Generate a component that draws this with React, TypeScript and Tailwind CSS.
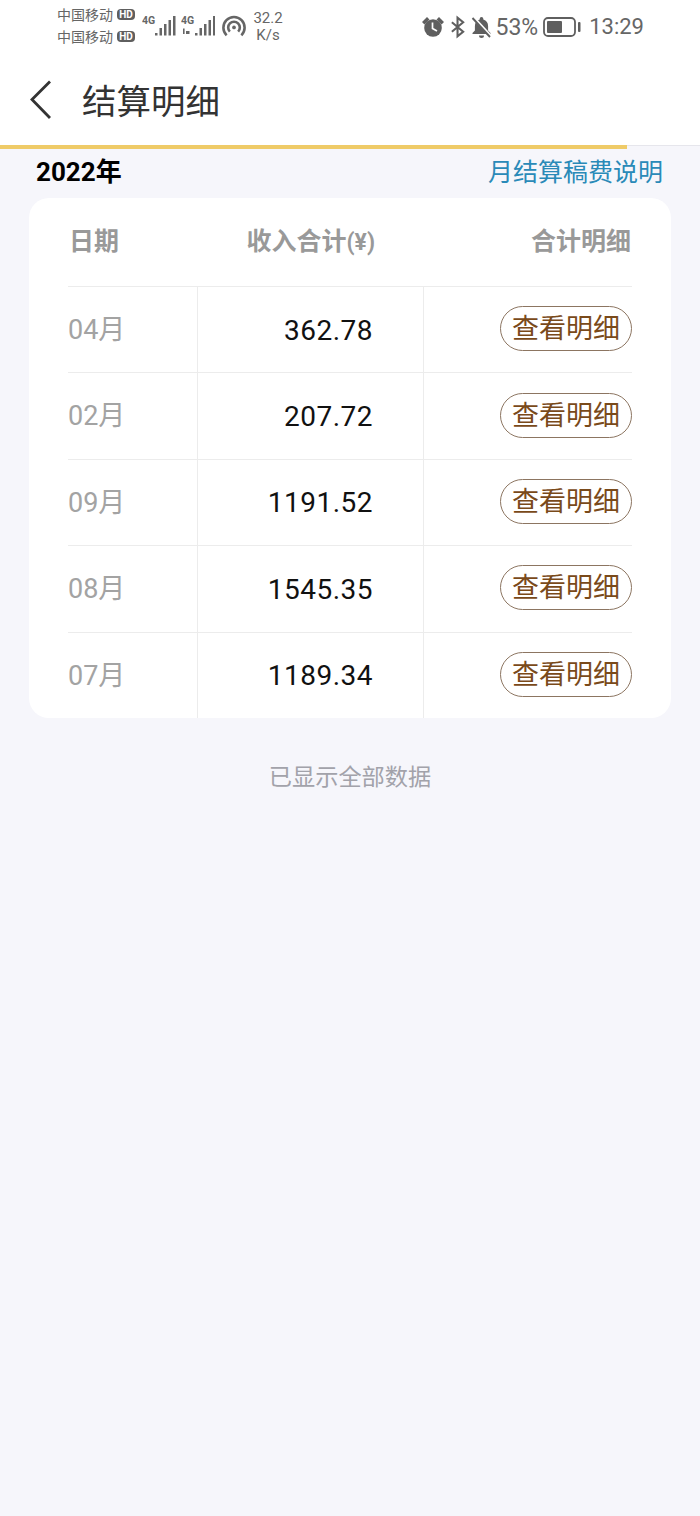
const cjk = { fontFamily: '"Roboto", "Noto Sans CJK SC", sans-serif' };

const rows = [
  { month: '04月', amount: '362.78' },
  { month: '02月', amount: '207.72' },
  { month: '09月', amount: '1191.52' },
  { month: '08月', amount: '1545.35' },
  { month: '07月', amount: '1189.34' },
];

function HdBadge() {
  return (
    <span className="ml-[4px] flex h-[11px] w-[18px] items-center justify-center rounded-[4px] bg-[#5f5f5f] text-[10px] font-bold leading-none text-white">
      HD
    </span>
  );
}

function Signal({ dual }: { dual?: boolean }) {
  const x = dual ? 14 : 13;
  return (
    <svg width="34" height="26" viewBox="0 0 34 26" fill="#666">
      <text x="0" y="10" fontSize="10.5" fontWeight="700" fontFamily="Roboto, sans-serif">4G</text>
      {dual ? <path d="M2 14.500h1.600V20H2zM5 17h3.500v3H5z" /> : null}
      <rect x={x} y="19" width="2.500" height="2.500" />
      <rect x={x + 4.500} y="14" width="2.500" height="7.500" />
      <rect x={x + 9} y="10" width="2.500" height="11.500" />
      <rect x={x + 13.500} y="6" width="2.500" height="15.500" />
      <rect x={x + 18} y="2" width="2.500" height="19.500" />
    </svg>
  );
}

function StatusBar() {
  return (
    <div className="flex h-[54px] items-center pl-[57px] pr-[56px] text-[#666]">
      <div className="-mt-[3px] flex flex-col gap-[4px] text-[14px] leading-[18px]">
        <div className="flex items-center">中国移动<HdBadge /></div>
        <div className="flex items-center">中国移动<HdBadge /></div>
      </div>
      <div className="ml-[7px] flex items-center gap-[5px]">
        <Signal />
        <Signal dual />
      </div>
      <svg className="ml-[7px]" width="24" height="24" viewBox="0 0 26 26" fill="none" stroke="#666" strokeWidth="2.800">
        <path d="M5 22A11.500 11.500 0 1 1 21 22" />
        <path d="M8.500 18A6.300 6.300 0 1 1 17.500 18" />
        <circle cx="13" cy="13.500" r="2" fill="#666" stroke="none" />
      </svg>
      <div className="ml-[7px] flex w-[30px] flex-col items-center text-[15px] leading-[17px]">
        <span>32.2</span>
        <span>K/s</span>
      </div>
      <div className="ml-auto flex items-center">
        <svg width="22" height="22" viewBox="0 0 22 22" fill="#5f5f5f">
          <circle cx="11" cy="12" r="8.800" />
          <path d="M0 6 5 1l2.500 2.500-5 5zM22 6l-5-5-2.500 2.500 5 5z" />
          <path d="M10.500 6.500v6l4.500 2.500" fill="none" stroke="#fff" strokeWidth="1.700" />
        </svg>
        <svg className="ml-[6px]" width="16" height="24" viewBox="0 0 17 24" fill="none" stroke="#5f5f5f" strokeWidth="2.200">
          <path d="M2 7l12 10-6 5V2l6 5L2 17" />
        </svg>
        <svg className="ml-[5px]" width="21" height="22" viewBox="0 0 21 22" fill="#5f5f5f">
          <path d="M10.500 1a1.800 1.800 0 0 1 1.800 1.800v.7c3.200.8 4.800 3.400 4.800 6.700v4.300l2.400 2.500v1H1.500v-1l2.400-2.500v-4.300c0-3.300 1.600-5.900 4.800-6.700v-.7A1.800 1.800 0 0 1 10.500 1zM8 19.500h5a2.500 2.500 0 0 1-5 0z" />
          <path d="M2.500 1.500l17 18.500" stroke="#fff" strokeWidth="3" />
          <path d="M1.500 2l17.500 19" stroke="#5f5f5f" strokeWidth="1.900" />
        </svg>
        <span className="ml-[4px] text-[23px] leading-none">53%</span>
        <svg className="ml-[5px]" width="38" height="20" viewBox="0 0 38 20" fill="none">
          <rect x="1" y="1" width="31" height="18" rx="4" stroke="#5f5f5f" strokeWidth="1.800" />
          <rect x="4" y="4" width="15" height="12" rx="1" fill="#5f5f5f" />
          <rect x="35" y="5" width="2.500" height="10" rx="1" fill="#5f5f5f" />
        </svg>
        <span className="ml-[8px] text-[22px] leading-none">13:29</span>
      </div>
    </div>
  );
}

export default function App() {
  return (
    <div className="min-h-[1516px] w-[700px] overflow-hidden bg-[#f6f6fb]" style={cjk}>
      <div className="bg-white">
        <StatusBar />
        <div className="flex h-[91px] items-center pl-[30px]">
          <svg width="22" height="40" viewBox="0 0 22 40" fill="none" stroke="#333" strokeWidth="2.800">
            <path d="M20 1.500 2 19.500 20 38" />
          </svg>
          <h1 className="ml-[30px] mt-[5px] text-[34.500px] font-normal leading-none text-[#333]">结算明细</h1>
        </div>
      </div>
      <div className="h-[4px] border-t border-[#e6e6ec]">
        <div className="-mt-px h-[4px] w-[627px] bg-[#efcb68]" />
      </div>
      <div className="flex h-[49px] items-center justify-between pb-[3px] pl-[36px] pr-[37px]">
        <span className="text-[26px] font-bold leading-none text-black">2022年</span>
        <span className="text-[25px] leading-none text-[#2a8ab8]">月结算稿费说明</span>
      </div>
      <div className="mx-[29px] rounded-[20px] bg-white px-[39px]">
        <div className="flex h-[88px] items-center text-[25px] font-bold text-[#999]">
          <div className="w-[129px] pl-[1px]">日期</div>
          <div className="w-[226px] pr-[48px] text-right">
            收入合计<span className="text-[23px]">(¥)</span>
          </div>
          <div className="flex-1 pr-[1px] text-right">合计明细</div>
        </div>
        {rows.map((r) => (
          <div key={r.month} className="flex h-[86.400px] border-t border-[#ececec]">
            <div className="flex w-[129px] items-center pt-[1px] text-[27px] text-[#a3a3a3]">{r.month}</div>
            <div className="flex w-[226px] items-center justify-end border-l border-[#ececec] pr-[50px] pt-[2px] text-[28px] tracking-[0.5px] text-[#111]">
              {r.amount}
            </div>
            <div className="flex flex-1 items-center justify-end border-l border-[#ececec] pb-[2px]">
              <button className="flex h-[45px] w-[132px] items-center justify-center rounded-full border border-[#8c7561] pt-[2px] text-[27px] leading-none text-[#7a4a1a]">
                查看明细
              </button>
            </div>
          </div>
        ))}
      </div>
      <div className="mt-[44px] text-center text-[23.200px] leading-[30px] text-[#a2a2aa]">已显示全部数据</div>
    </div>
  );
}
